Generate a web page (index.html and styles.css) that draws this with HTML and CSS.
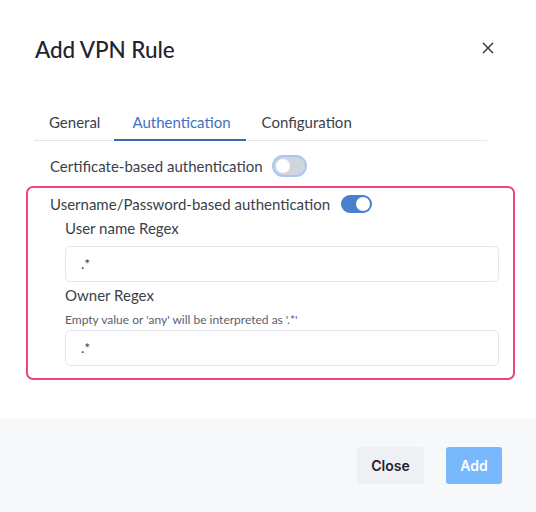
FILE: index.html
```html
<!DOCTYPE html>
<html>
<head>
<meta charset="utf-8">
<link rel="stylesheet" href="styles.css">
</head>
<body>
<div class="modal">
  <div class="header">
    <h1 class="title">Add VPN Rule</h1>
    <button class="close-x" aria-label="Close">
      <svg width="12" height="12" viewBox="0 0 12 12"><path d="M1 1L11 11M11 1L1 11" stroke="#2a2f3b" stroke-width="1.4" fill="none"/></svg>
    </button>
  </div>
  <div class="tabs">
    <div class="tab first">General</div>
    <div class="tab active">Authentication</div>
    <div class="tab last">Configuration</div>
  </div>
  <div class="body">
    <div class="toggle-row outer">
      <span>Certificate-based authentication</span>
      <span class="toggle off focus"><span class="knob"></span></span>
    </div>
    <div class="group">
      <div class="toggle-row">
        <span>Username/Password-based authentication</span>
        <span class="toggle on"><span class="knob"></span></span>
      </div>
      <div class="fields">
        <label class="label">User name Regex</label>
        <div class="input">.*</div>
        <label class="label second">Owner Regex</label>
        <div class="hint">Empty value or 'any' will be interpreted as '.*'</div>
        <div class="input">.*</div>
      </div>
    </div>
  </div>
  <div class="footer">
    <button class="btn btn-close">Close</button>
    <button class="btn btn-add">Add</button>
  </div>
</div>
</body>
</html>
```
FILE: styles.css
```css
* { box-sizing: border-box; }
html, body { margin: 0; padding: 0; background: #fff; }
body { font-family: Lato, "Noto Sans", sans-serif; color: #2e3340; width: 536px; height: 512px; overflow: hidden; }
.modal { display: flex; flex-direction: column; height: 512px; }
.header { display: flex; justify-content: space-between; align-items: flex-start; padding: 36px 38px 0 35px; height: 105px; }
.title { margin: 0; font-size: 22.5px; font-weight: 500; color: #1f2433; line-height: 28px; letter-spacing: -0.1px; }
.close-x { border: 0; background: none; padding: 0; margin-top: 2px; width: 20px; height: 20px; display: flex; align-items: center; justify-content: center; }
.tabs { display: flex; margin: 0 49px 0 34px; border-bottom: 1px solid #e3e6ec; height: 36px; }
.tab { padding: 0 15px; font-size: 15px; line-height: 35px; color: #3a3f4b; }
.tab.first { padding: 0 14px 0 15px; }
.tab.last { padding: 0 15px 0 16px; }
.tab.active { color: #3f72c0; border-bottom: 2px solid #3b67ad; padding: 0 15px 0 18px; margin-bottom: -1px; }
.body { padding: 14px 21px 0 26px; }
.toggle-row { display: flex; align-items: center; font-size: 15px; color: #3a3f4b; gap: 11px; height: 22px; }
.toggle-row.outer { padding-left: 24px; margin-bottom: 9px; }
.toggle { position: relative; width: 31px; height: 18px; border-radius: 9px; display: inline-block; }
.toggle .knob { position: absolute; top: 2px; width: 14px; height: 14px; border-radius: 50%; background: #fff; }
.toggle.off { background: #cfd5de; }
.toggle.off .knob { left: 2px; }
.toggle.focus { box-shadow: 0 0 0 2px #a9c8f1; }
.toggle.on { background: #4a7ecf; }
.toggle.on .knob { right: 2px; }
.group { border: 2px solid #f0457b; border-radius: 7px; padding: 5px 14px 12px 22px; }
.fields { padding-left: 15px; }
.label { display: block; font-size: 15px; color: #3a3f4b; line-height: 20px; margin-top: 3px; margin-bottom: 8px; }
.label.second { margin-top: 3px; margin-bottom: 7px; }
.hint { font-size: 12px; color: #5a6070; line-height: 16px; margin-bottom: 2px; }
.input { height: 36px; border: 1px solid #e2e6ee; border-radius: 5px; padding: 0 15px; font-size: 14px; line-height: 34px; color: #3a3f4b; }
.footer { margin-top: auto; height: 93px; background: #f7f8fa; display: flex; justify-content: flex-end; align-items: flex-start; padding: 28px 34px 0 0; gap: 22px; }
.btn { border: 0; border-radius: 3px; height: 37px; font-family: Inter, "Noto Sans", sans-serif; font-size: 14px; font-weight: 600; padding: 0; }
.btn-close { width: 67px; background: #eef0f4; color: #1e2130; }
.btn-add { width: 56px; background: #78b8fc; color: #fff; }
```
